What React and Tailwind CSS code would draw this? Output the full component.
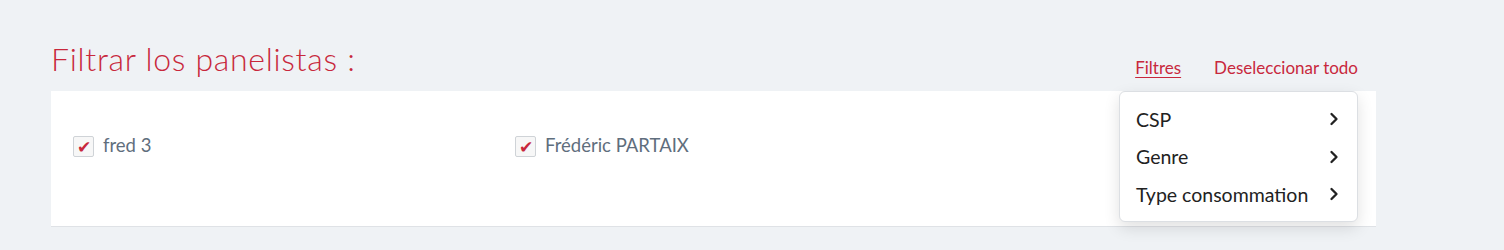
import { ChevronRight } from 'lucide-react'

const panelists = ['fred 3', 'Frédéric PARTAIX']
const filters = ['CSP', 'Genre', 'Type consommation']

function Check({ label }) {
  return (
    <label className="flex items-center w-[442px] h-[22px]">
      <span className="flex items-center justify-center w-[21px] h-[21px] border border-[#cfd3d7] rounded-[2px] bg-[#f7f7f7] text-[#c8283c] text-[17px] leading-none">
        ✔
      </span>
      <span className="ml-[9px] text-[18.5px] text-[#5f6e7d]">{label}</span>
    </label>
  )
}

export default function App() {
  return (
    <div className="min-h-[250px] bg-[#eff2f5] pt-[39px] font-['Lato','Liberation_Sans',sans-serif]">
      <div className="ml-[51px] w-[1325px]">
        {/* Header */}
        <div className="flex items-end justify-between pb-[12px]">
          <h1 className="text-[32px] leading-[40px] font-light tracking-[0.7px] text-[#c8283c]">Filtrar los panelistas :</h1>
          <div className="relative flex items-center gap-[33px] mr-[18px] mb-[-1px] text-[17px] text-[#c8283c]">
            <a className="underline underline-offset-[3px] cursor-pointer">Filtres</a>
            <a className="cursor-pointer">Deseleccionar todo</a>

            {/* Dropdown */}
            <div className="absolute right-0 top-[36px] z-10 w-[239px] pt-[9px] pb-[8px] bg-white border border-[#dcdfe3] rounded-[6px] shadow-[0_6px_16px_rgba(0,0,0,0.12)]">
              {filters.map(f => (
                <div key={f} className="flex items-center justify-between pl-[16px] pr-[13px] h-[37.5px] text-[19.5px] text-[#222]">
                  <span>{f}</span>
                  <ChevronRight size={20} strokeWidth={2.8} />
                </div>
              ))}
            </div>
          </div>
        </div>

        {/* Panel */}
        <div className="bg-white border-b border-[#dfe2e6] h-[136px] pl-[22px] pt-[44px] flex items-start">
          {panelists.map(p => <Check key={p} label={p} />)}
        </div>
      </div>
    </div>
  )
}
